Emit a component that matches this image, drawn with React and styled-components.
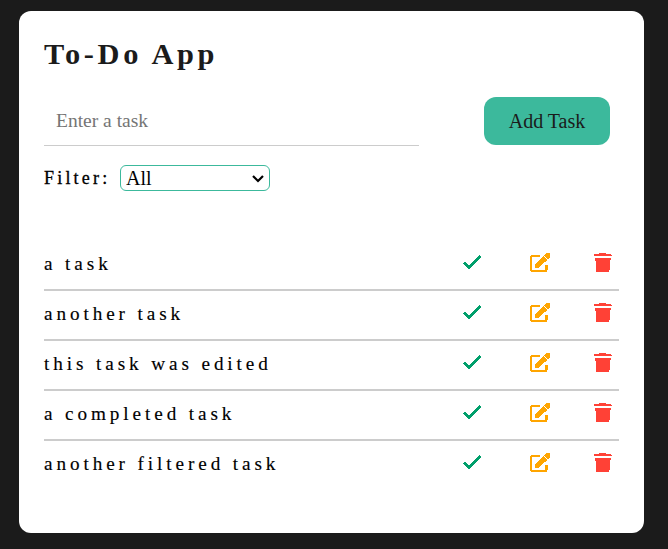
import React, { useState } from "react";
import styled, { createGlobalStyle } from "styled-components";

const GlobalStyle = createGlobalStyle`
  * { box-sizing: border-box; }
  html, body { margin: 0; background: #1b1b1b; }
  body, input, button, select { font-family: "Liberation Serif", "Times New Roman", serif; }
`;

const Card = styled.main`
  width: 625px;
  height: 522px;
  margin: 11px 0 0 19px;
  padding: 25px;
  background: #fff;
  border-radius: 12px;
  color: #000;
`;

const Title = styled.h1`
  margin: 0;
  height: 36px;
  font-size: 30.4px;
  line-height: 37px;
  letter-spacing: 3.6px;
  color: #1b1b1b;
`;

const TaskForm = styled.form`
  display: flex;
  justify-content: space-between;
  margin-top: 25px;
  padding-right: 9px;
`;

const TaskInput = styled.input`
  width: 375px;
  height: 49px;
  padding: 0 12px;
  border: 0;
  border-bottom: 1px solid #ccc;
  outline: 0;
  background: transparent;
  font-size: 19.5px;
  &::placeholder { color: #757575; }
`;

const AddButton = styled.button`
  width: 126px;
  height: 48px;
  padding: 0;
  border: 0;
  border-radius: 12px;
  background: #3cb99c;
  color: #1b1b1b;
  font-size: 20px;
`;

const FilterRow = styled.div`
  display: flex;
  align-items: center;
  height: 26px;
  margin-top: 19px;
`;

const FilterLabel = styled.label`
  width: 76px;
  font-size: 18px;
  letter-spacing: 3.2px;
  -webkit-text-stroke: 0.3px #000;
`;

const SelectBox = styled.div`
  position: relative;
  width: 150px;
  height: 26px;
`;

const FilterSelect = styled.select`
  display: block;
  appearance: none;
  width: 100%;
  height: 100%;
  padding: 0 5px;
  border: 1px solid #3cb99c;
  border-radius: 6px;
  background: #fff;
  color: #000;
  font-size: 20px;
`;

const SelectArrow = styled.svg`
  position: absolute;
  top: 10px;
  right: 6px;
  pointer-events: none;
`;

const TaskList = styled.ul`
  list-style: none;
  margin: 50px 0 0;
  padding: 0;
`;

const TaskRow = styled.li`
  display: flex;
  align-items: center;
  height: 50px;
  padding-bottom: 2px;
  border-bottom: 2px solid #ccc;
  &:last-child { border-color: transparent; }
`;

const TaskName = styled.span`
  flex: 1;
  font-size: 19.2px;
  letter-spacing: 3.9px;
  -webkit-text-stroke: 0.15px #000;
`;

const Actions = styled.div`
  display: grid;
  grid-template-columns: 70px 64px 18px;
  align-items: center;
  padding-right: 7px;
  margin-top: -2px;
`;

const IconButton = styled.button`
  display: flex;
  padding: 0;
  border: 0;
  background: none;
  color: ${(p) => p.$color};
  svg { shape-rendering: crispEdges; }
`;

const CheckIcon = () => (
  <svg width="24" height="20" viewBox="0 0 24 20">
    <path d="M3.7 9.4L9 14.7L20.4 3.4" fill="none" stroke="currentColor" strokeWidth="2.7" />
  </svg>
);

const EditIcon = () => (
  <svg width="20" height="20" viewBox="0 0 20 20" fill="currentColor">
    <path d="M9.5 3H3Q1 3 1 5V16Q1 18 3 18H14.5Q16.5 18 16.5 16V11.5" fill="none" stroke="currentColor" strokeWidth="2.3" />
    <path d="M5 15V11L13 3L17.2 7L9 14.5Z" />
    <path d="M13.7 2.5L16 0H19L20 1V4L18 6.2Z" />
  </svg>
);

const TrashIcon = () => (
  <svg width="18" height="20" viewBox="0 0 18 20" fill="currentColor">
    <path d="M0 1H5V0H12V1H17V2H18V3H0Z" />
    <path d="M1 5H17V7H16V17H15V19H2V8H1Z" />
  </svg>
);

const initialTasks = ["a task", "another task", "this task was edited", "a completed task", "another filtered task"];

export default function App() {
  const [tasks, setTasks] = useState(initialTasks);
  const [draft, setDraft] = useState("");

  const addTask = (event) => {
    event.preventDefault();
    if (!draft.trim()) return;
    setTasks([...tasks, draft.trim()]);
    setDraft("");
  };

  return (
    <>
      <GlobalStyle />
      <Card>
        <Title>To-Do App</Title>
        <TaskForm onSubmit={addTask}>
          <TaskInput placeholder="Enter a task" value={draft} onChange={(e) => setDraft(e.target.value)} />
          <AddButton type="submit">Add Task</AddButton>
        </TaskForm>
        <FilterRow>
          <FilterLabel htmlFor="filter">Filter:</FilterLabel>
          <SelectBox>
            <FilterSelect id="filter" defaultValue="All">
              <option>All</option>
              <option>Completed</option>
            </FilterSelect>
            <SelectArrow width="12" height="8" viewBox="0 0 12 8">
              <path d="M1 1L6 6L11 1" fill="none" stroke="#000" strokeWidth="2.2" />
            </SelectArrow>
          </SelectBox>
        </FilterRow>
        <TaskList>
          {tasks.map((task, i) => (
            <TaskRow key={i}>
              <TaskName>{task}</TaskName>
              <Actions>
                <IconButton $color="#009f6b" aria-label="Complete"><CheckIcon /></IconButton>
                <IconButton $color="#ffa500" aria-label="Edit"><EditIcon /></IconButton>
                <IconButton
                  $color="#ff4136"
                  aria-label="Delete"
                  onClick={() => setTasks(tasks.filter((_, n) => n !== i))}
                >
                  <TrashIcon />
                </IconButton>
              </Actions>
            </TaskRow>
          ))}
        </TaskList>
      </Card>
    </>
  );
}
